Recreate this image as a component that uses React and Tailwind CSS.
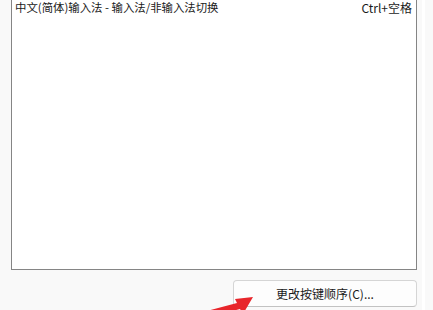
import React from "react";

const font = {
  fontFamily: '"Noto Sans CJK SC", "Microsoft YaHei", "Noto Sans", sans-serif',
};

// Red annotation arrow pointing at the button
const Arrow = () => (
  <svg
    className="absolute left-[195px] top-[285px]"
    width="60"
    height="36"
    viewBox="0 0 60 36"
  >
    <polygon
      points="58,12 40,14 42,18 8,27 11,33 45,24 48,29"
      fill="#e8262b"
    />
  </svg>
);

export default function App() {
  return (
    <div
      className="relative w-[433px] h-[310px] overflow-hidden bg-[#f9f9f9] flex"
      style={font}
    >
      <div className="w-[422px] flex flex-col">
        {/* list box */}
        <div className="ml-[11px] w-[406px] h-[270px] bg-white border-x border-b border-[#858585]">
          <div className="flex justify-between items-center h-[16px] pl-[3px] pr-[4px] text-[12px] leading-none text-[#1a1a1a]">
            <span className="text-[11.4px]">中文(简体)输入法 - 输入法/非输入法切换</span>
            <span>Ctrl+空格</span>
          </div>
        </div>

        {/* buttons */}
        <div className="flex justify-end pt-[10px] pr-[5px]">
          <button className="w-[184px] h-[27px] rounded-[4px] bg-[#fdfdfd] border border-[#d5d5d5] border-b-[#c2c2c2] text-[12px] leading-none text-[#1a1a1a]">
            更改按键顺序(C)...
          </button>
        </div>
      </div>
      <div className="w-[3px] bg-white" />
      <div className="flex-1" />
      <Arrow />
    </div>
  );
}
